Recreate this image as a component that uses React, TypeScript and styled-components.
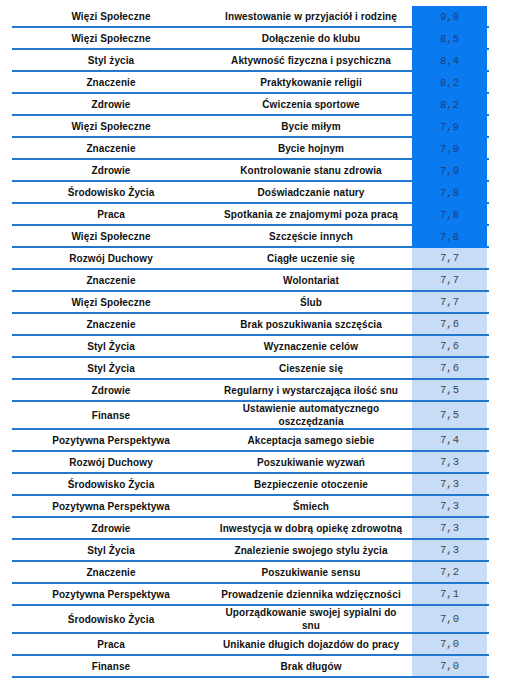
import styled, { createGlobalStyle } from "styled-components";

const GlobalStyle = createGlobalStyle`
  body {
    margin: 0;
    background: #ffffff;
  }
`;

type Row = { category: string; activity: string; score: string };

const rows: Row[] = [
  { category: "Więzi Społeczne", activity: "Inwestowanie w przyjaciół i rodzinę", score: "9,0" },
  { category: "Więzi Społeczne", activity: "Dołączenie do klubu", score: "8,5" },
  { category: "Styl życia", activity: "Aktywność fizyczna i psychiczna", score: "8,4" },
  { category: "Znaczenie", activity: "Praktykowanie religii", score: "8,2" },
  { category: "Zdrowie", activity: "Ćwiczenia sportowe", score: "8,2" },
  { category: "Więzi Społeczne", activity: "Bycie miłym", score: "7,9" },
  { category: "Znaczenie", activity: "Bycie hojnym", score: "7,9" },
  { category: "Zdrowie", activity: "Kontrolowanie stanu zdrowia", score: "7,9" },
  { category: "Środowisko Życia", activity: "Doświadczanie natury", score: "7,8" },
  { category: "Praca", activity: "Spotkania ze znajomymi poza pracą", score: "7,8" },
  { category: "Więzi Społeczne", activity: "Szczęście innych", score: "7,8" },
  { category: "Rozwój Duchowy", activity: "Ciągłe uczenie się", score: "7,7" },
  { category: "Znaczenie", activity: "Wolontariat", score: "7,7" },
  { category: "Więzi Społeczne", activity: "Ślub", score: "7,7" },
  { category: "Znaczenie", activity: "Brak poszukiwania szczęścia", score: "7,6" },
  { category: "Styl Życia", activity: "Wyznaczenie celów", score: "7,6" },
  { category: "Styl Życia", activity: "Cieszenie się", score: "7,6" },
  { category: "Zdrowie", activity: "Regularny i wystarczająca ilość snu", score: "7,5" },
  { category: "Finanse", activity: "Ustawienie automatycznego oszczędzania", score: "7,5" },
  { category: "Pozytywna Perspektywa", activity: "Akceptacja samego siebie", score: "7,4" },
  { category: "Rozwój Duchowy", activity: "Poszukiwanie wyzwań", score: "7,3" },
  { category: "Środowisko Życia", activity: "Bezpieczenie otoczenie", score: "7,3" },
  { category: "Pozytywna Perspektywa", activity: "Śmiech", score: "7,3" },
  { category: "Zdrowie", activity: "Inwestycja w dobrą opiekę zdrowotną", score: "7,3" },
  { category: "Styl Życia", activity: "Znalezienie swojego stylu życia", score: "7,3" },
  { category: "Znaczenie", activity: "Poszukiwanie sensu", score: "7,2" },
  { category: "Pozytywna Perspektywa", activity: "Prowadzenie dziennika wdzięczności", score: "7,1" },
  { category: "Środowisko Życia", activity: "Uporządkowanie swojej sypialni do snu", score: "7,0" },
  { category: "Praca", activity: "Unikanie długich dojazdów do pracy", score: "7,0" },
  { category: "Finanse", activity: "Brak długów", score: "7,0" },
];

const Table = styled.div`
  margin: 6px 0 0 12px;
  width: 477px;
  display: flex;
  flex-direction: column;
`;

const TableRow = styled.div`
  display: grid;
  grid-template-columns: 198px 202px 75px;
  border-bottom: 2px solid #2377cc;
`;

const Cell = styled.div`
  min-height: 20px;
  display: flex;
  align-items: center;
  justify-content: center;
  text-align: center;
  padding: 0 6px;
  font-family: "Liberation Sans", Arial, sans-serif;
  font-weight: bold;
  font-size: 10px;
  letter-spacing: 0.1px;
  line-height: 13px;
  color: #111111;
`;

const Score = styled.div<{ $top: boolean }>`
  display: flex;
  align-items: center;
  justify-content: center;
  background: ${(p) => (p.$top ? "#0a7af0" : "#c7ddf7")};
  color: ${(p) => (p.$top ? "#1c3c78" : "#444444")};
  font-family: "Liberation Mono", "Courier New", monospace;
  font-size: 10.5px;
  margin-bottom: ${(p) => (p.$top ? "-2px" : "0")};
  position: relative;
`;

export default function App() {
  return (
    <>
      <GlobalStyle />
      <Table>
        {rows.map((r, i) => (
          <TableRow key={i}>
            <Cell>{r.category}</Cell>
            <Cell>{r.activity}</Cell>
            <Score $top={i < 11}>{r.score}</Score>
          </TableRow>
        ))}
      </Table>
    </>
  );
}
